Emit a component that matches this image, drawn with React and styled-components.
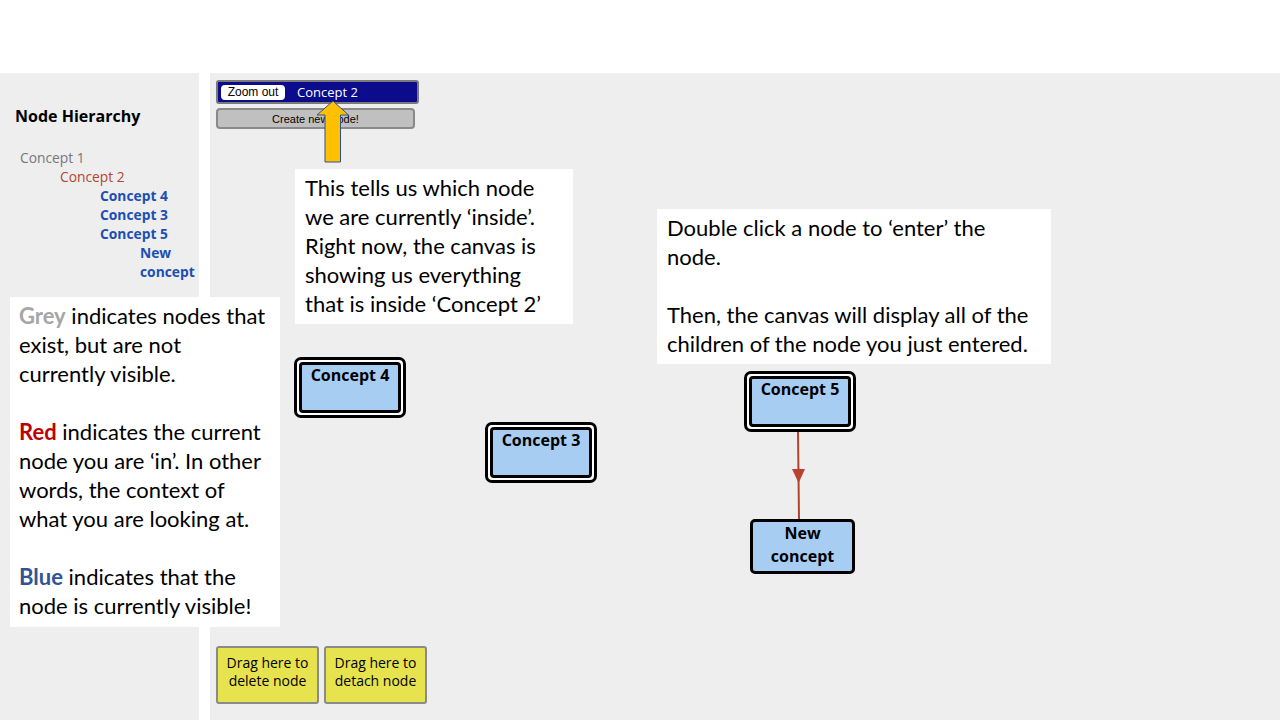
import React from 'react';
import styled, { createGlobalStyle } from 'styled-components';

const GlobalStyle = createGlobalStyle`
  body {
    margin: 0;
    background: #ffffff;
    overflow: hidden;
  }
`;

const hierarchy = [
  { label: 'Concept 1', depth: 0, state: 'hidden' },
  { label: 'Concept 2', depth: 1, state: 'current' },
  { label: 'Concept 4', depth: 2, state: 'visible' },
  { label: 'Concept 3', depth: 2, state: 'visible' },
  { label: 'Concept 5', depth: 2, state: 'visible' },
  { label: 'New concept', depth: 3, state: 'visible' },
];

const nodes = [
  { id: 4, label: 'Concept 4', x: 84, y: 284 },
  { id: 3, label: 'Concept 3', x: 275, y: 349 },
  { id: 5, label: 'Concept 5', x: 534, y: 298 },
];

function App() {
  return (
    <Page>
      <GlobalStyle />
      <TopBand />
      <Main>
        <Sidebar>
          <SidebarTitle>Node Hierarchy</SidebarTitle>
          <Tree>
            {hierarchy.map((item) => (
              <TreeItem key={item.label} $depth={item.depth} $state={item.state}>
                {item.label}
              </TreeItem>
            ))}
          </Tree>
        </Sidebar>
        <Canvas>
          <Toolbar>
            <Breadcrumb>
              <ZoomOut>Zoom out</ZoomOut>
              <CurrentNode>Concept 2</CurrentNode>
            </Breadcrumb>
            <CreateButton>Create new node!</CreateButton>
          </Toolbar>

          {nodes.map((n) => (
            <NodeFrame key={n.id} $x={n.x} $y={n.y}>
              <NodeBody>{n.label}</NodeBody>
            </NodeFrame>
          ))}
          <PlainNode $x={540} $y={446}>
            New
            <br />
            concept
          </PlainNode>

          <Edges width="100" height="160" viewBox="0 0 100 160">
            <line x1="48" y1="59" x2="49" y2="146" stroke="#b5432f" strokeWidth="2" />
            <polygon points="42,96 55,96 48.6,110" fill="#b5432f" />
          </Edges>

          <DropZones>
            <DropZone>Drag here to delete node</DropZone>
            <DropZone>Drag here to detach node</DropZone>
          </DropZones>
        </Canvas>
      </Main>

      <UpArrow width="44" height="64" viewBox="0 0 44 64">
        <polygon
          points="22,1 37.5,15 29.5,15 29.5,62 14,62 14,15 6,15"
          fill="#ffc000"
          stroke="#2f528f"
          strokeWidth="1"
        />
      </UpArrow>

      <Callout $x={295} $y={169} $w={278} $h={155}>
        <Line>This tells us which node</Line>
        <Line>we are currently ‘inside’.</Line>
        <Line>Right now, the canvas is</Line>
        <Line>showing us everything</Line>
        <Line>that is inside ‘Concept 2’</Line>
      </Callout>

      <Callout $x={657} $y={209} $w={394} $h={155}>
        <Line>Double click a node to ‘enter’ the</Line>
        <Line>node.</Line>
        <Line>&nbsp;</Line>
        <Line>Then, the canvas will display all of the</Line>
        <Line>children of the node you just entered.</Line>
      </Callout>

      <Callout $x={10} $y={297} $w={270} $h={330} $pad={9}>
        <Line>
          <Key $color="#a6a6a6">Grey</Key> indicates nodes that
        </Line>
        <Line>exist, but are not</Line>
        <Line>currently visible.</Line>
        <Line>&nbsp;</Line>
        <Line>
          <Key $color="#c00000">Red</Key> indicates the current
        </Line>
        <Line>node you are ‘in’. In other</Line>
        <Line>words, the context of</Line>
        <Line>what you are looking at.</Line>
        <Line>&nbsp;</Line>
        <Line>
          <Key $color="#2f5597">Blue</Key> indicates that the
        </Line>
        <Line>node is currently visible!</Line>
      </Callout>
    </Page>
  );
}

export default App;

const Page = styled.div`
  position: relative;
  width: 1280px;
  height: 720px;
  display: flex;
  flex-direction: column;
  background: #ffffff;
  font-family: 'Open Sans', 'DejaVu Sans', sans-serif;
`;

const TopBand = styled.div`
  height: 73px;
  flex-shrink: 0;
`;

const Main = styled.div`
  flex: 1;
  display: flex;
  gap: 11px;
  min-height: 0;
`;

const Sidebar = styled.div`
  width: 199px;
  flex-shrink: 0;
  background: #eeeeee;
  padding: 32px 0 0 15px;
  box-sizing: border-box;
`;

const SidebarTitle = styled.h2`
  margin: 0;
  font-size: 16px;
  font-weight: 700;
  color: #000;
  line-height: 22px;
`;

const Tree = styled.div`
  margin-top: 21px;
  padding-left: 5px;
`;

const treeColors = {
  hidden: '#777777',
  current: '#b5452f',
  visible: '#1c4fb3',
};

const TreeItem = styled.div`
  font-size: 13.8px;
  line-height: 19px;
  padding-left: ${(p) => p.$depth * 40}px;
  color: ${(p) => treeColors[p.$state]};
  font-weight: ${(p) => (p.$state === 'visible' ? 700 : 400)};
`;

const Canvas = styled.div`
  position: relative;
  flex: 1;
  background: #eeeeee;
  display: flex;
  flex-direction: column;
  justify-content: space-between;
  padding: 7px 6px 16px;
`;

const Toolbar = styled.div`
  display: flex;
  flex-direction: column;
  gap: 4px;
  align-items: flex-start;
`;

const Breadcrumb = styled.div`
  width: 203px;
  height: 24px;
  box-sizing: border-box;
  display: flex;
  align-items: center;
  gap: 12px;
  padding: 0 3px;
  background: #0b0b8b;
  border: 2px solid #7a7a7a;
  border-radius: 3px;
`;

const ZoomOut = styled.button`
  width: 64px;
  height: 15px;
  padding: 0;
  border: none;
  border-radius: 4px;
  background: #ffffff;
  color: #000;
  font-family: 'Liberation Sans', Arial, sans-serif;
  font-size: 12px;
  line-height: 15px;
`;

const CurrentNode = styled.span`
  color: #ffffff;
  font-size: 13px;
  line-height: 16px;
`;

const CreateButton = styled.button`
  width: 199px;
  height: 21px;
  padding: 0;
  box-sizing: border-box;
  background: #c0c0c0;
  border: 2px solid #8a8a8a;
  border-radius: 4px;
  color: #000;
  font-family: 'Liberation Sans', Arial, sans-serif;
  font-size: 11px;
`;

const NodeFrame = styled.div`
  position: absolute;
  left: ${(p) => p.$x}px;
  top: ${(p) => p.$y}px;
  width: 112px;
  height: 61px;
  box-sizing: border-box;
  border: 3px solid #000;
  border-radius: 7px;
  background: #ffffff;
  padding: 2px;
  display: flex;
`;

const NodeBody = styled.div`
  flex: 1;
  border: 3px solid #000;
  border-radius: 4px;
  background: #a8cdf2;
  font-size: 16px;
  font-weight: 700;
  text-align: center;
  line-height: 20px;
  color: #000;
`;

const PlainNode = styled.div`
  position: absolute;
  left: ${(p) => p.$x}px;
  top: ${(p) => p.$y}px;
  width: 105px;
  height: 55px;
  box-sizing: border-box;
  border: 3px solid #000;
  border-radius: 5px;
  background: #a8cdf2;
  font-size: 16px;
  font-weight: 700;
  text-align: center;
  line-height: 23px;
  color: #000;
`;

const Edges = styled.svg`
  position: absolute;
  left: 540px;
  top: 300px;
  overflow: visible;
`;

const DropZones = styled.div`
  display: flex;
  gap: 5px;
`;

const DropZone = styled.div`
  width: 103px;
  height: 58px;
  box-sizing: border-box;
  text-align: center;
  padding: 6px 8px 0;
  background: #e6e34f;
  border: 2px solid #8a8a8a;
  border-radius: 3px;
  font-size: 14px;
  line-height: 18px;
  color: #000;
`;

const UpArrow = styled.svg`
  position: absolute;
  left: 311px;
  top: 100px;
`;

const Callout = styled.div`
  position: absolute;
  left: ${(p) => p.$x}px;
  top: ${(p) => p.$y}px;
  width: ${(p) => p.$w}px;
  height: ${(p) => p.$h}px;
  box-sizing: border-box;
  padding: 4px ${(p) => p.$pad || 10}px;
  background: #ffffff;
  font-family: Lato, 'Liberation Sans', sans-serif;
  font-size: 22px;
  line-height: 29px;
  color: #000;
`;

const Line = styled.div`
  white-space: nowrap;
`;

const Key = styled.span`
  font-weight: 700;
  color: ${(p) => p.$color};
`;
